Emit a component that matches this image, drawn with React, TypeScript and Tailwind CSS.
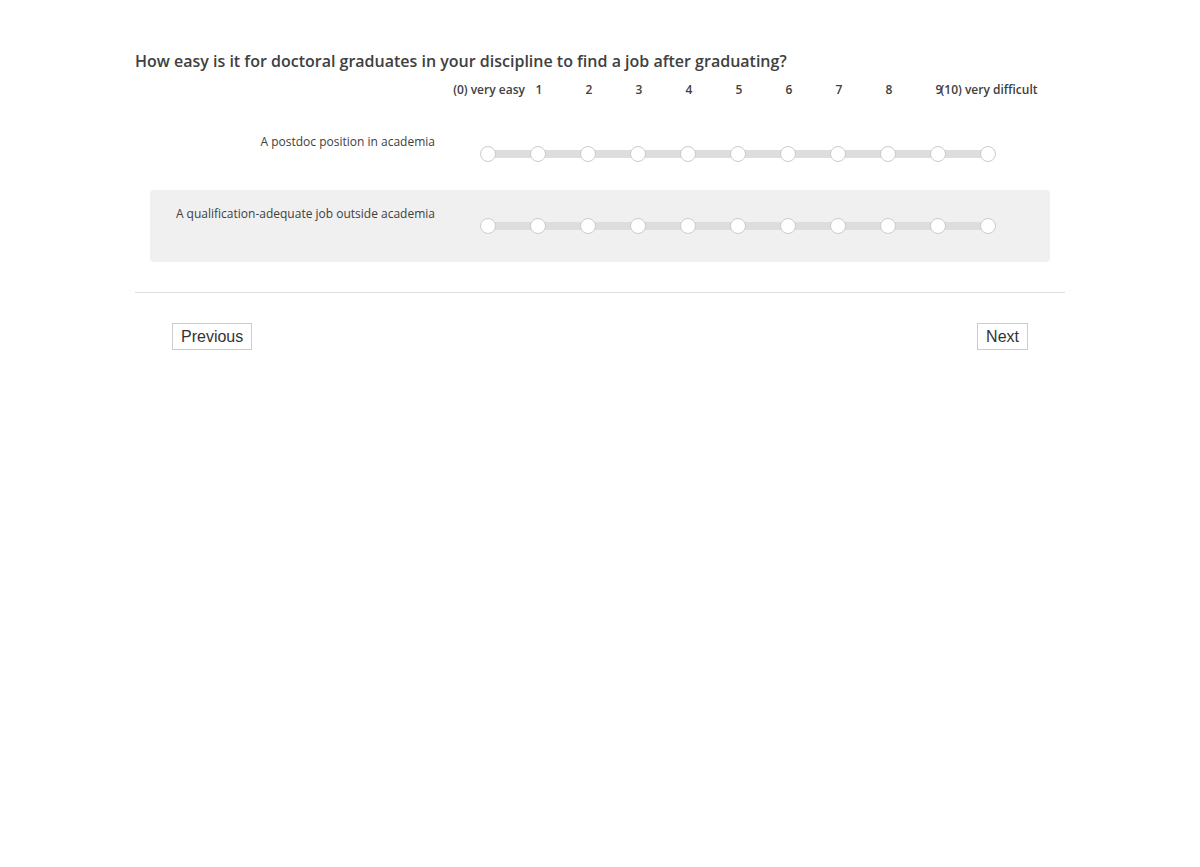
import React from "react";

const scaleLabels = [
  "(0) very easy",
  "1",
  "2",
  "3",
  "4",
  "5",
  "6",
  "7",
  "8",
  "9",
  "(10) very difficult",
];

const items = [
  "A postdoc position in academia",
  "A qualification-adequate job outside academia",
];

function Slider() {
  return (
    <div className="relative flex w-[550px] h-4">
      <div className="absolute left-[25px] right-[25px] top-1 h-2 bg-[#dddddd]" />
      {scaleLabels.map((_, i) => (
        <div key={i} className="relative flex w-[50px] justify-center">
          <span className="w-4 h-4 rounded-full bg-white border border-[#cccccc]" />
        </div>
      ))}
    </div>
  );
}

export default function App() {
  return (
    <div className="bg-white min-h-screen font-['Open_Sans',sans-serif] text-[#404040]">
      <div className="w-[930px] ml-[135px] pt-[50px]">
        <h2 className="text-[16px] leading-[22px] font-semibold">
          How easy is it for doctoral graduates in your discipline to find a job after graduating?
        </h2>

        <div className="flex pl-[329px] mt-[9px] h-[18px]">
          {scaleLabels.map((label, i) => (
            <div key={i} className="flex w-[50px] justify-center">
              <span className="whitespace-nowrap text-[12px] leading-[18px] font-semibold">
                {label}
              </span>
            </div>
          ))}
        </div>

        <div className="flex flex-col mx-[15px] mt-[19px]">
          {items.map((item, idx) => (
            <div
              key={item}
              className={`flex h-[72px] rounded pt-[15px] ${idx % 2 === 1 ? "bg-[#f0f0f0]" : ""}`}
            >
              <div className="w-[285px] text-right text-[12px] leading-[18px]">
                {item}
              </div>
              <div className="pl-[28px] pt-[13px]">
                <Slider />
              </div>
            </div>
          ))}
        </div>

        <div className="mt-[30px] border-t border-[#dddddd]" />

        <div className="flex justify-between px-[37px] pt-[30px]">
          <button className="h-[27px] px-2 border border-[#cccccc] bg-white text-[16px] leading-[20px] text-[#333333] font-['Liberation_Sans',Arial,sans-serif]">
            Previous
          </button>
          <button className="h-[27px] px-2 border border-[#cccccc] bg-white text-[16px] leading-[20px] text-[#333333] font-['Liberation_Sans',Arial,sans-serif]">
            Next
          </button>
        </div>
      </div>
    </div>
  );
}
